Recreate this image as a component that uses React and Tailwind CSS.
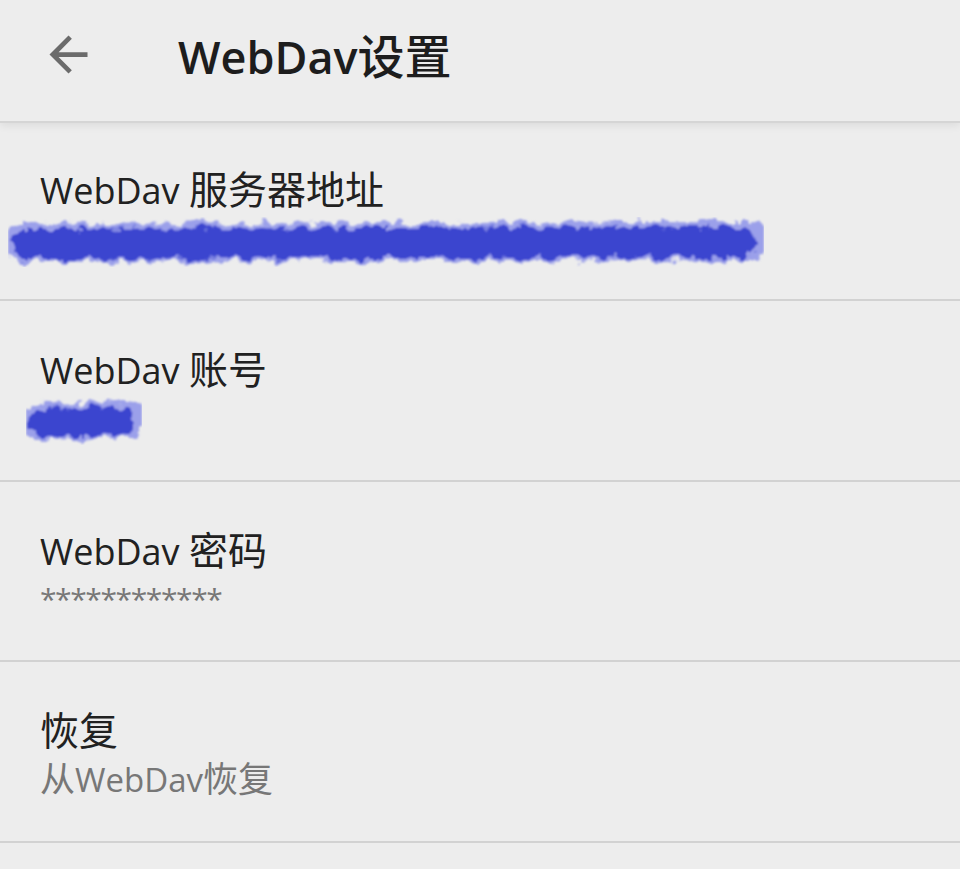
import { useId } from "react";

const font = { fontFamily: "'Open Sans', 'Noto Sans CJK SC', sans-serif" };

// Split a label into latin and CJK runs so each can get its own size
// (the device renders CJK a touch larger than the latin glyphs).
function Mixed({ text, latin, cjk }) {
  const parts = text.match(/[\u3400-\u9fff]+|[^\u3400-\u9fff]+/g) || [];
  return parts.map((p, i) => (
    <span key={i} className={/[\u3400-\u9fff]/.test(p) ? cjk : latin}>
      {p}
    </span>
  ));
}

// Redaction scribble: a thick marker stroke roughened with turbulence.
function Scribble({ width, height, seed = 3 }) {
  const id = useId().replace(/:/g, "");
  const mid = height / 2;
  return (
    <svg width={width} height={height} viewBox={`0 0 ${width} ${height}`} className="block">
      <defs>
        <filter id={`rough${id}`} filterUnits="userSpaceOnUse" x="0" y="0" width={width} height={height}>
          <feTurbulence type="fractalNoise" baseFrequency="0.08" numOctaves="3" seed={seed} result="n" />
          <feDisplacementMap in="SourceGraphic" in2="n" scale="16" xChannelSelector="R" yChannelSelector="G" result="d" />
          <feGaussianBlur in="d" stdDeviation="0.8" />
        </filter>
      </defs>
      <g filter={`url(#rough${id})`}>
        <path
          d={`M14 ${mid + 1} L${width - 14} ${mid - 1}`}
          stroke="#9ba0ea"
          strokeWidth={height - 12}
          strokeLinecap="round"
          fill="none"
        />
        <path
          d={`M18 ${mid + 2} L${width - 22} ${mid}`}
          stroke="#3b45cf"
          strokeWidth={height - 20}
          strokeLinecap="round"
          fill="none"
        />
      </g>
    </svg>
  );
}

const rows = [
  { title: "WebDav 服务器地址", blob: { w: 756, h: 50, x: "ml-[-32px]", seed: 4 }, first: true },
  { title: "WebDav 账号", blob: { w: 116, h: 48, x: "ml-[-14px]", seed: 7 } },
  { title: "WebDav 密码", sub: "************", stars: true },
  { title: "恢复", sub: "从WebDav恢复" },
];

export default function App() {
  return (
    <div className="min-h-[869px] w-[960px] overflow-hidden bg-[#ededed]" style={font}>
      <header className="relative z-10 flex h-[123px] items-center border-b-2 border-[#d5d5d5] bg-[#ededed] pb-[12px] shadow-[0_3px_8px_rgba(0,0,0,0.07)]">
        <svg viewBox="0 0 24 24" className="ml-[40px] h-[57px] w-[57px]" fill="#6b6b6b">
          <path d="M20 11H7.83l5.59-5.59L12 4l-8 8 8 8 1.41-1.41L7.83 13H20v-2z" />
        </svg>
        <h1 className="ml-[81px] mt-[3px] text-[46px] leading-[56px] text-[#1d1d1d]">
          <Mixed text="WebDav设置" latin="text-[45px] font-semibold" cjk="text-[47px] font-medium" />
        </h1>
      </header>

      {rows.map((row) => (
        <div
          key={row.title}
          className={`border-b-2 border-[#d2d2d2] pl-[40px] ${row.first ? "h-[178px] pt-[43px]" : "h-[180.7px] pt-[45px]"}`}
        >
          <div className="text-[36px] leading-[46px] text-[#212121]">
            <Mixed text={row.title} latin="text-[36px]" cjk="text-[39px]" />
          </div>
          {row.blob ? (
            <div className={`${row.blob.x} pt-[3px]`}>
              <Scribble width={row.blob.w} height={row.blob.h} seed={row.blob.seed} />
            </div>
          ) : row.stars ? (
            <div className="text-[30px] leading-[48px] tracking-[-1.4px] text-[#777777]">{row.sub}</div>
          ) : (
            <div className="text-[33px] leading-[48px] text-[#777777]">
              <Mixed text={row.sub} latin="text-[33px]" cjk="text-[35px]" />
            </div>
          )}
        </div>
      ))}
    </div>
  );
}
